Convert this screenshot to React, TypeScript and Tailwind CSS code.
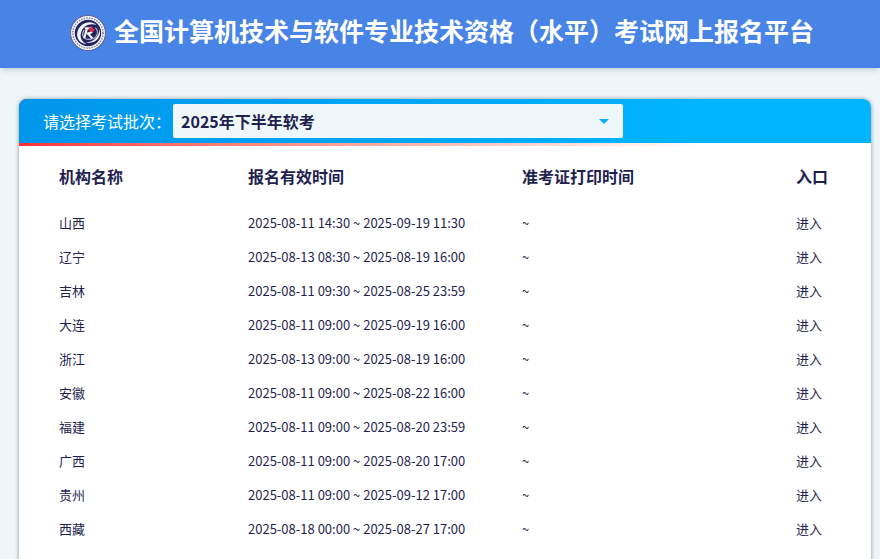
const regions = [
  { name: "山西", signup: "2025-08-11 14:30 ~ 2025-09-19 11:30", print: "~" },
  { name: "辽宁", signup: "2025-08-13 08:30 ~ 2025-08-19 16:00", print: "~" },
  { name: "吉林", signup: "2025-08-11 09:30 ~ 2025-08-25 23:59", print: "~" },
  { name: "大连", signup: "2025-08-11 09:00 ~ 2025-09-19 16:00", print: "~" },
  { name: "浙江", signup: "2025-08-13 09:00 ~ 2025-08-19 16:00", print: "~" },
  { name: "安徽", signup: "2025-08-11 09:00 ~ 2025-08-22 16:00", print: "~" },
  { name: "福建", signup: "2025-08-11 09:00 ~ 2025-08-20 23:59", print: "~" },
  { name: "广西", signup: "2025-08-11 09:00 ~ 2025-08-20 17:00", print: "~" },
  { name: "贵州", signup: "2025-08-11 09:00 ~ 2025-09-12 17:00", print: "~" },
  { name: "西藏", signup: "2025-08-18 00:00 ~ 2025-08-27 17:00", print: "~" },
];

const Logo = () => (
  <svg viewBox="0 0 68 68" className="w-9 h-9 shrink-0" aria-hidden="true">
    <circle cx="34" cy="34" r="33" fill="#fbfbfe" stroke="#5b6390" strokeWidth="2" />
    {/* ring lettering */}
    <circle cx="34" cy="34" r="28.5" fill="none" stroke="#8486a3" strokeWidth="3" strokeDasharray="3 2" />
    <circle cx="34" cy="34" r="25" fill="#23235f" />
    {/* swirl */}
    <path d="M50 19C39 8 18 15 14 32c-3 13 6 22 17 23-9-5-13-13-10-22C24 20 38 14 50 19z" fill="#f4f5fa" />
    <path d="M56 27c4 16-8 28-26 25 14-1 24-9 26-25z" fill="#f4f5fa" />
    <path d="M48 24c8 9 3 22-12 22-12 0-15-10-9-18" fill="none" stroke="#b9bcd6" strokeWidth="2" />
    <path d="M32 25l-5 19M28 25h9c9 0 6 10-5 10M34 35l8 9" fill="none" stroke="#f4f5fa" strokeWidth="4" />
    <path d="M35 23l4 2 2-4 2 4 4 2-4 5-6-1z" fill="#e0263c" />
  </svg>
);

const Header = () => (
  <header className="relative flex items-center justify-center gap-2 h-17 pb-0.5 pl-1 bg-[#4884e6] shadow-md">
    <Logo />
    <h1 className="pb-1.5 text-[25px] leading-9 font-bold text-white whitespace-nowrap">
      全国计算机技术与软件专业技术资格（水平）考试网上报名平台
    </h1>
  </header>
);

const BatchBar = () => (
  <div className="bg-linear-to-r from-[#ff2d37] to-white to-80% pb-[3px] rounded-t-lg">
    <div className="flex items-center gap-0.5 h-11 px-6 bg-linear-to-r from-[#0096eb] to-[#00b4ff] to-80% rounded-t-lg">
      <label htmlFor="batch" className="text-base text-white whitespace-nowrap">
        请选择考试批次：
      </label>
      <div className="relative w-[450px]">
        <select
          id="batch"
          className="appearance-none block w-full h-[34px] pl-2 pr-8 rounded-xs bg-[#eef7f9] text-base leading-6 font-bold"
        >
          <option>2025年下半年软考</option>
        </select>
        <svg viewBox="0 0 10 5" className="absolute right-3.5 top-[15px] w-2.5 h-[5px] pointer-events-none">
          <path d="M0 0h10L5 5z" fill="#00b0ff" />
        </svg>
      </div>
    </div>
  </div>
);

const RegionTable = () => (
  <table className="w-full table-fixed text-left">
    <colgroup>
      <col className="w-[229px]" />
      <col />
      <col />
      <col className="w-[75px]" />
    </colgroup>
    <thead>
      <tr className="h-[60px] text-base">
        <th className="pl-10 font-bold">机构名称</th>
        <th className="font-bold">报名有效时间</th>
        <th className="font-bold">准考证打印时间</th>
        <th className="font-bold">入口</th>
      </tr>
    </thead>
    <tbody>
      {regions.map((region) => (
        <tr key={region.name} className="h-[34px] text-[13px] leading-5">
          <td className="pl-10">{region.name}</td>
          <td className="whitespace-nowrap">{region.signup}</td>
          <td>{region.print}</td>
          <td>
            <a href="#" className="hover:underline">进入</a>
          </td>
        </tr>
      ))}
    </tbody>
  </table>
);

export default function App() {
  return (
    <div className="min-h-screen bg-[#eef6f9] text-[#1f1f50] font-['Noto_Sans_CJK_SC',sans-serif]">
      <Header />
      <main className="pt-[31px] pl-[19px] pr-[9px]">
        <section className="pb-10 bg-white rounded-t-lg shadow-[0_0_4px_rgba(0,0,0,0.4)]">
          <BatchBar />
          <RegionTable />
        </section>
      </main>
    </div>
  );
}
